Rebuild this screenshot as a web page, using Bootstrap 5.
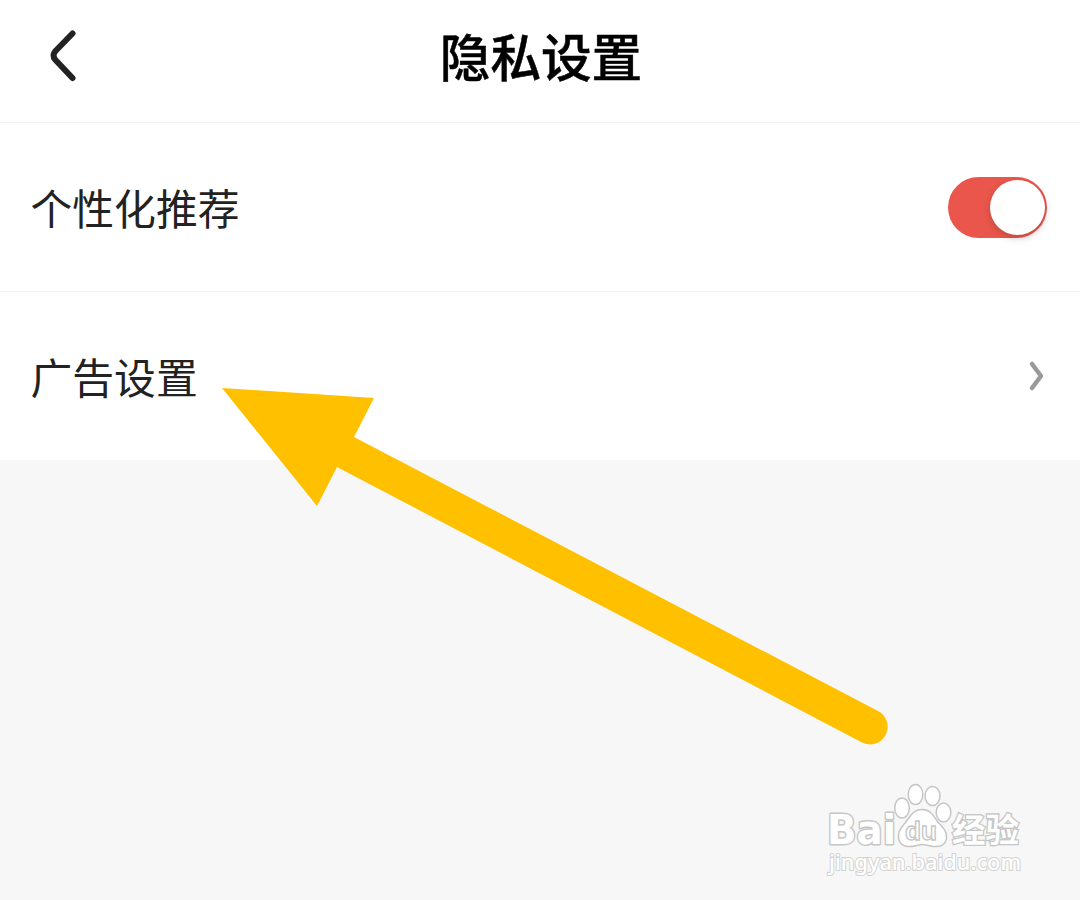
<!DOCTYPE html>
<html lang="zh-CN">
<head>
    <meta charset="UTF-8">
    <meta name="viewport" content="width=device-width, initial-scale=1.0">
    <title>隐私设置</title>
    <link href="https://cdn.jsdelivr.net/npm/bootstrap@5.3.0/dist/css/bootstrap.min.css" rel="stylesheet">
    <style>
        body {
            background: #f7f7f7;
            font-family: "Noto Sans CJK SC", sans-serif;
            height: 900px;
            overflow: hidden;
        }
        .top-bar {
            height: 123px;
            border-bottom: 1px solid #f2f2f2;
            padding: 0 0 12px 2px;
        }
        .top-bar h1 {
            font-size: 50.6px;
            font-weight: 500;
            line-height: 1;
            color: #000;
            -webkit-text-stroke: .5px #000;
        }
        .back-link {
            left: 46px;
            top: 26px;
        }
        .setting-row {
            height: 169px;
            padding: 0 33px 0 30.5px;
            font-size: 41.8px;
            line-height: 1;
            color: #222;
            border-bottom: 1px solid #f2f2f2;
        }
        .setting-row:last-child {
            height: 168px;
            border-bottom: 0;
        }
        .setting-row .row-label {
            padding-top: 2px;
        }
        .toggle {
            width: 99px;
            height: 61px;
            background: #ea564b;
            padding-right: 2px;
        }
        .toggle-knob {
            width: 55px;
            height: 55px;
            box-shadow: 0 3px 7px rgba(90, 40, 35, .28);
        }
        .overlay {
            pointer-events: none;
        }
    </style>
</head>
<body class="position-relative">
<header class="top-bar bg-white d-flex align-items-center justify-content-center position-relative">
    <a href="#" class="back-link position-absolute d-flex" aria-label="返回">
        <svg width="36" height="60" viewBox="0 0 36 60" fill="none" stroke="#222" stroke-width="6" stroke-linecap="round">
            <path d="M26.500 7.500L9.500 25Q5.500 29.500 9.500 34L26.500 52"/>
        </svg>
    </a>
    <h1 class="m-0">隐私设置</h1>
</header>

<main class="bg-white">
    <div class="setting-row d-flex align-items-center justify-content-between">
        <span class="row-label">个性化推荐</span>
        <div class="toggle rounded-pill d-flex align-items-center justify-content-end" role="switch" aria-checked="true" aria-label="个性化推荐">
            <span class="toggle-knob rounded-circle bg-white"></span>
        </div>
    </div>
    <div class="setting-row d-flex align-items-center justify-content-between">
        <span class="row-label">广告设置</span>
        <svg width="20" height="36" viewBox="0 0 20 36" fill="none" stroke="#999" stroke-width="4.500" stroke-linecap="round" stroke-linejoin="round">
            <path d="M5 6L14 18L5 30"/>
        </svg>
    </div>
</main>

<!-- pointer arrow and watermark -->
<svg class="overlay position-absolute top-0 start-0" width="1080" height="900" viewBox="0 0 1080 900">
    <path fill="#ffc000" d="M222 388L374 398L354 437L878 711A17.300 17.300 0 0 1 862 742.500L337 467L317 506Z"/>

    <g fill="#fff" stroke="#c6c6c6" stroke-width="1.500">
        <text x="827" y="844" font-family="DejaVu Sans, sans-serif" font-size="41" font-weight="bold" textLength="69" lengthAdjust="spacingAndGlyphs" stroke-width="3" stroke-linejoin="round" paint-order="stroke">Bai</text>
        <ellipse cx="902" cy="808" rx="7.300" ry="10"/>
        <ellipse cx="915.500" cy="794.500" rx="7.300" ry="10"/>
        <ellipse cx="932.500" cy="796" rx="7.500" ry="9.500"/>
        <ellipse cx="943.500" cy="812.500" rx="7.300" ry="9.500"/>
        <path d="M922 809.500C930 809.500 933 815 937 821C942 827 947 830 946.500 838C946 845 940 847 934 846.500C929 846 926 844.500 922 844.500C918 844.500 914 847 908 846.500C902 846 898 842 898.500 835C899 828 905 824 908 819C911 814 915 809.500 922 809.500Z"/>
        <text x="905" y="840" font-family="Liberation Sans, sans-serif" font-size="26" textLength="32" lengthAdjust="spacingAndGlyphs" font-weight="bold" stroke-width="1.300">du</text>
        <text x="952" y="841.500" font-family="Noto Sans CJK SC, sans-serif" font-size="33.500" font-weight="bold" textLength="67" stroke-width="2.600" paint-order="stroke">经验</text>
        <text x="829" y="870" font-family="Noto Sans, sans-serif" font-size="22" font-weight="500" textLength="192" lengthAdjust="spacingAndGlyphs" stroke="#d2d2d2" stroke-width="2" paint-order="stroke">jingyan.baidu.com</text>
    </g>
</svg>

<script src="https://cdn.jsdelivr.net/npm/bootstrap@5.3.0/dist/js/bootstrap.bundle.min.js"></script>
</body>
</html>
